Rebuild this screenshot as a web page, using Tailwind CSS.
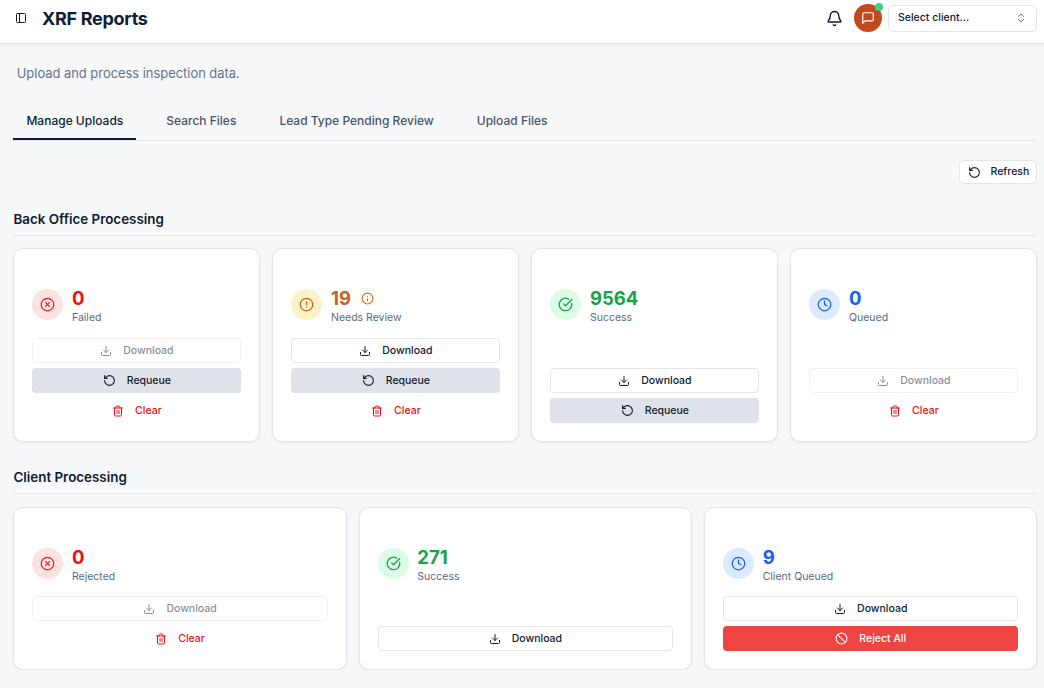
<!DOCTYPE html>
<html lang="en">
<head>
  <meta charset="UTF-8" />
  <title>XRF Reports</title>
  <meta name="viewport" content="width=device-width, initial-scale=1.0" />
  <script src="https://cdn.jsdelivr.net/npm/@tailwindcss/browser@4"></script>
</head>
<body class="bg-[#f7f8fa] text-[#0f1c33] font-['Inter',sans-serif] overflow-hidden">

  <svg class="hidden">
    <symbol id="i-panel" viewBox="0 0 24 24"><rect x="3" y="3" width="18" height="18" rx="2"/><path d="M9 3v18"/></symbol>
    <symbol id="i-bell" viewBox="0 0 24 24"><path d="M10.268 21a2 2 0 0 0 3.464 0"/><path d="M3.262 15.326A1 1 0 0 0 4 17h16a1 1 0 0 0 .74-1.673C19.41 13.956 18 12.499 18 8A6 6 0 0 0 6 8c0 4.499-1.411 5.956-2.738 7.326"/></symbol>
    <symbol id="i-chat" viewBox="0 0 24 24"><path d="M21 15a2 2 0 0 1-2 2H7l-4 4V5a2 2 0 0 1 2-2h14a2 2 0 0 1 2 2z"/></symbol>
    <symbol id="i-updown" viewBox="0 0 24 24"><path d="m7 15 5 5 5-5"/><path d="m7 9 5-5 5 5"/></symbol>
    <symbol id="i-rotate" viewBox="0 0 24 24"><path d="M3 12a9 9 0 1 0 9-9 9.75 9.75 0 0 0-6.74 2.74L3 8"/><path d="M3 3v5h5"/></symbol>
    <symbol id="i-download" viewBox="0 0 24 24"><path d="M21 15v4a2 2 0 0 1-2 2H5a2 2 0 0 1-2-2v-4"/><path d="m7 10 5 5 5-5"/><path d="M12 15V3"/></symbol>
    <symbol id="i-trash" viewBox="0 0 24 24"><path d="M3 6h18"/><path d="M19 6v14c0 1-1 2-2 2H7c-1 0-2-1-2-2V6"/><path d="M8 6V4c0-1 1-2 2-2h4c1 0 2 1 2 2v2"/><path d="M10 11v6"/><path d="M14 11v6"/></symbol>
    <symbol id="i-xcircle" viewBox="0 0 24 24"><circle cx="12" cy="12" r="10"/><path d="m15 9-6 6"/><path d="m9 9 6 6"/></symbol>
    <symbol id="i-alert" viewBox="0 0 24 24"><circle cx="12" cy="12" r="10"/><path d="M12 8v4"/><path d="M12 16h.01"/></symbol>
    <symbol id="i-info" viewBox="0 0 24 24"><circle cx="12" cy="12" r="10"/><path d="M12 16v-4"/><path d="M12 8h.01"/></symbol>
    <symbol id="i-check" viewBox="0 0 24 24"><path d="M21.801 10A10 10 0 1 1 17 3.335"/><path d="m9 11 3 3L22 4"/></symbol>
    <symbol id="i-clock" viewBox="0 0 24 24"><circle cx="12" cy="12" r="10"/><path d="M12 6v6l4 2"/></symbol>
    <symbol id="i-ban" viewBox="0 0 24 24"><circle cx="12" cy="12" r="10"/><path d="m4.9 4.9 14.2 14.2"/></symbol>
  </svg>

  <header class="h-[44px] bg-white border-b border-[#e2e5ea] shadow-[0_1px_2px_rgba(15,28,51,0.08)] flex items-center pl-[15px] pr-[7px] pb-[7px]">
    <svg class="w-3 h-3 fill-none stroke-current stroke-2 [stroke-linecap:round] [stroke-linejoin:round]"><use href="#i-panel"/></svg>
    <h1 class="ml-[15px] text-[18px] font-bold tracking-[-0.3px]">XRF Reports</h1>
    <svg class="ml-auto w-[17px] h-[17px] fill-none stroke-current stroke-2 [stroke-linecap:round] [stroke-linejoin:round]"><use href="#i-bell"/></svg>
    <div class="relative ml-[11px] w-7 h-7 rounded-full bg-[#c2491a] flex items-center justify-center text-white">
      <svg class="w-[14px] h-[14px] fill-none stroke-current stroke-2 [stroke-linecap:round] [stroke-linejoin:round]"><use href="#i-chat"/></svg>
      <span class="absolute -top-[1px] -right-[1px] w-2 h-2 rounded-full bg-[#3ecf8e]"></span>
    </div>
    <div class="ml-[6px] w-[149px] h-[27px] bg-white border border-[#e2e5ea] rounded-[5px] flex items-center justify-between pl-[9px] pr-[9px] text-[10.5px] font-medium">
      Select client...
      <svg class="w-3 h-3 fill-none stroke-[#66728a] stroke-2 [stroke-linecap:round] [stroke-linejoin:round]"><use href="#i-updown"/></svg>
    </div>
  </header>

  <main class="pl-[13.4px] pr-[6.6px]">
    <p class="pt-[21px] pl-[3.4px] text-[12.9px] leading-[18px] text-[#64748b]">Upload and process inspection data.</p>

    <nav class="mt-[19px] h-[39px] flex gap-[17px] border-b border-[#e2e5ea] text-[12px] font-medium text-[#475569]">
      <a class="px-[13px] leading-[38px] border-b-2 border-[#0f1c33] text-[#0f1c33] h-[38px]">Manage Uploads</a>
      <a class="px-[13px] leading-[38px]">Search Files</a>
      <a class="px-[13px] leading-[38px]">Lead Type Pending Review</a>
      <a class="px-[13px] leading-[38px]">Upload Files</a>
    </nav>

    <div class="mt-[19px] flex justify-end">
      <button class="h-[24px] w-[78px] bg-white border border-[#e2e5ea] rounded-[5px] flex items-center justify-center gap-[10px] text-[10.5px] font-medium">
        <svg class="w-[13px] h-[13px] fill-none stroke-current stroke-2 [stroke-linecap:round] [stroke-linejoin:round]"><use href="#i-rotate"/></svg>
        Refresh
      </button>
    </div>

    <!-- back office -->
    <h2 class="mt-[27px] pb-[7px] border-b border-[#e2e5ea] text-[13.4px] leading-[17px] font-semibold">Back Office Processing</h2>
    <section class="mt-[12px] grid grid-cols-4 gap-[12px]">

      <div class="h-[194px] bg-white border border-[#e2e5ea] rounded-[10px] shadow-[0_1px_2px_rgba(15,28,51,0.08)] px-[18px] pt-[40px] pb-[18px] flex flex-col">
        <div class="flex gap-[8.6px]">
          <span class="w-[31px] h-[31px] rounded-full bg-[#fee2e2] text-[#e11d1d] flex items-center justify-center"><svg class="w-[15px] h-[15px] fill-none stroke-current stroke-2 [stroke-linecap:round] [stroke-linejoin:round]"><use href="#i-xcircle"/></svg></span>
          <div><p class="text-[18.5px] leading-[19px] font-bold text-[#ee0f12]">0</p><p class="mt-[3px] text-[10.5px] leading-[14px] text-[#5a6a82]">Failed</p></div>
        </div>
        <div class="mt-auto flex flex-col gap-[5px]">
          <button class="h-[25px] bg-white border border-[#e2e5ea] rounded-[4px] flex items-center justify-center gap-[11px] text-[10.5px] font-medium opacity-50"><svg class="w-3 h-3 fill-none stroke-current stroke-2 [stroke-linecap:round] [stroke-linejoin:round]"><use href="#i-download"/></svg>Download</button>
          <button class="h-[25px] bg-[#dfe2e8] rounded-[4px] flex items-center justify-center gap-[11px] text-[10.5px] font-medium"><svg class="w-[13px] h-[13px] fill-none stroke-current stroke-2 [stroke-linecap:round] [stroke-linejoin:round]"><use href="#i-rotate"/></svg>Requeue</button>
          <button class="h-[25px] rounded-[4px] flex items-center justify-center gap-[11px] text-[10.5px] font-medium text-[#ee0f12]"><svg class="w-3 h-3 fill-none stroke-current stroke-2 [stroke-linecap:round] [stroke-linejoin:round]"><use href="#i-trash"/></svg>Clear</button>
        </div>
      </div>

      <div class="h-[194px] bg-white border border-[#e2e5ea] rounded-[10px] shadow-[0_1px_2px_rgba(15,28,51,0.08)] px-[18px] pt-[40px] pb-[18px] flex flex-col">
        <div class="flex gap-[8.6px]">
          <span class="w-[31px] h-[31px] rounded-full bg-[#fef3c7] text-[#d9581a] flex items-center justify-center"><svg class="w-[15px] h-[15px] fill-none stroke-current stroke-2 [stroke-linecap:round] [stroke-linejoin:round]"><use href="#i-alert"/></svg></span>
          <div>
            <p class="flex items-center gap-[10px] text-[18.5px] leading-[19px] font-bold text-[#d0601f]">19<svg class="w-[13px] h-[13px] -mt-[1px] fill-none stroke-[#e8620f] stroke-2 [stroke-linecap:round] [stroke-linejoin:round]"><use href="#i-info"/></svg></p>
            <p class="mt-[3px] text-[10.5px] leading-[14px] text-[#5a6a82]">Needs Review</p>
          </div>
        </div>
        <div class="mt-auto flex flex-col gap-[5px]">
          <button class="h-[25px] bg-white border border-[#e2e5ea] rounded-[4px] flex items-center justify-center gap-[11px] text-[10.5px] font-medium"><svg class="w-3 h-3 fill-none stroke-current stroke-2 [stroke-linecap:round] [stroke-linejoin:round]"><use href="#i-download"/></svg>Download</button>
          <button class="h-[25px] bg-[#dfe2e8] rounded-[4px] flex items-center justify-center gap-[11px] text-[10.5px] font-medium"><svg class="w-[13px] h-[13px] fill-none stroke-current stroke-2 [stroke-linecap:round] [stroke-linejoin:round]"><use href="#i-rotate"/></svg>Requeue</button>
          <button class="h-[25px] rounded-[4px] flex items-center justify-center gap-[11px] text-[10.5px] font-medium text-[#ee0f12]"><svg class="w-3 h-3 fill-none stroke-current stroke-2 [stroke-linecap:round] [stroke-linejoin:round]"><use href="#i-trash"/></svg>Clear</button>
        </div>
      </div>

      <div class="h-[194px] bg-white border border-[#e2e5ea] rounded-[10px] shadow-[0_1px_2px_rgba(15,28,51,0.08)] px-[18px] pt-[40px] pb-[18px] flex flex-col">
        <div class="flex gap-[8.6px]">
          <span class="w-[31px] h-[31px] rounded-full bg-[#dcfce7] text-[#16a34a] flex items-center justify-center"><svg class="w-[15px] h-[15px] fill-none stroke-current stroke-2 [stroke-linecap:round] [stroke-linejoin:round]"><use href="#i-check"/></svg></span>
          <div><p class="text-[18.5px] leading-[19px] font-bold text-[#16a34a]">9564</p><p class="mt-[3px] text-[10.5px] leading-[14px] text-[#5a6a82]">Success</p></div>
        </div>
        <div class="mt-auto flex flex-col gap-[5px]">
          <button class="h-[25px] bg-white border border-[#e2e5ea] rounded-[4px] flex items-center justify-center gap-[11px] text-[10.5px] font-medium"><svg class="w-3 h-3 fill-none stroke-current stroke-2 [stroke-linecap:round] [stroke-linejoin:round]"><use href="#i-download"/></svg>Download</button>
          <button class="h-[25px] bg-[#dfe2e8] rounded-[4px] flex items-center justify-center gap-[11px] text-[10.5px] font-medium"><svg class="w-[13px] h-[13px] fill-none stroke-current stroke-2 [stroke-linecap:round] [stroke-linejoin:round]"><use href="#i-rotate"/></svg>Requeue</button>
        </div>
      </div>

      <div class="h-[194px] bg-white border border-[#e2e5ea] rounded-[10px] shadow-[0_1px_2px_rgba(15,28,51,0.08)] px-[18px] pt-[40px] pb-[18px] flex flex-col">
        <div class="flex gap-[8.6px]">
          <span class="w-[31px] h-[31px] rounded-full bg-[#dbeafe] text-[#155dfc] flex items-center justify-center"><svg class="w-[15px] h-[15px] fill-none stroke-current stroke-2 [stroke-linecap:round] [stroke-linejoin:round]"><use href="#i-clock"/></svg></span>
          <div><p class="text-[18.5px] leading-[19px] font-bold text-[#155dfc]">0</p><p class="mt-[3px] text-[10.5px] leading-[14px] text-[#5a6a82]">Queued</p></div>
        </div>
        <div class="mt-auto flex flex-col gap-[5px]">
          <button class="h-[25px] bg-white border border-[#e2e5ea] rounded-[4px] flex items-center justify-center gap-[11px] text-[10.5px] font-medium opacity-50"><svg class="w-3 h-3 fill-none stroke-current stroke-2 [stroke-linecap:round] [stroke-linejoin:round]"><use href="#i-download"/></svg>Download</button>
          <button class="h-[25px] rounded-[4px] flex items-center justify-center gap-[11px] text-[10.5px] font-medium text-[#ee0f12]"><svg class="w-3 h-3 fill-none stroke-current stroke-2 [stroke-linecap:round] [stroke-linejoin:round]"><use href="#i-trash"/></svg>Clear</button>
        </div>
      </div>
    </section>

    <!-- client -->
    <h2 class="mt-[27px] pb-[7px] border-b border-[#e2e5ea] text-[13.4px] leading-[17px] font-semibold">Client Processing</h2>
    <section class="mt-[13px] grid grid-cols-3 gap-[12px]">

      <div class="h-[163px] bg-white border border-[#e2e5ea] rounded-[10px] shadow-[0_1px_2px_rgba(15,28,51,0.08)] px-[18px] pt-[40px] pb-[18px] flex flex-col">
        <div class="flex gap-[8.6px]">
          <span class="w-[31px] h-[31px] rounded-full bg-[#fee2e2] text-[#e11d1d] flex items-center justify-center"><svg class="w-[15px] h-[15px] fill-none stroke-current stroke-2 [stroke-linecap:round] [stroke-linejoin:round]"><use href="#i-xcircle"/></svg></span>
          <div><p class="text-[18.5px] leading-[19px] font-bold text-[#ee0f12]">0</p><p class="mt-[3px] text-[10.5px] leading-[14px] text-[#5a6a82]">Rejected</p></div>
        </div>
        <div class="mt-auto flex flex-col gap-[5px]">
          <button class="h-[25px] bg-white border border-[#e2e5ea] rounded-[4px] flex items-center justify-center gap-[11px] text-[10.5px] font-medium opacity-50"><svg class="w-3 h-3 fill-none stroke-current stroke-2 [stroke-linecap:round] [stroke-linejoin:round]"><use href="#i-download"/></svg>Download</button>
          <button class="h-[25px] rounded-[4px] flex items-center justify-center gap-[11px] text-[10.5px] font-medium text-[#ee0f12]"><svg class="w-3 h-3 fill-none stroke-current stroke-2 [stroke-linecap:round] [stroke-linejoin:round]"><use href="#i-trash"/></svg>Clear</button>
        </div>
      </div>

      <div class="h-[163px] bg-white border border-[#e2e5ea] rounded-[10px] shadow-[0_1px_2px_rgba(15,28,51,0.08)] px-[18px] pt-[40px] pb-[18px] flex flex-col">
        <div class="flex gap-[8.6px]">
          <span class="w-[31px] h-[31px] rounded-full bg-[#dcfce7] text-[#16a34a] flex items-center justify-center"><svg class="w-[15px] h-[15px] fill-none stroke-current stroke-2 [stroke-linecap:round] [stroke-linejoin:round]"><use href="#i-check"/></svg></span>
          <div><p class="text-[18.5px] leading-[19px] font-bold text-[#16a34a]">271</p><p class="mt-[3px] text-[10.5px] leading-[14px] text-[#5a6a82]">Success</p></div>
        </div>
        <div class="mt-auto flex flex-col gap-[5px]">
          <button class="h-[25px] bg-white border border-[#e2e5ea] rounded-[4px] flex items-center justify-center gap-[11px] text-[10.5px] font-medium"><svg class="w-3 h-3 fill-none stroke-current stroke-2 [stroke-linecap:round] [stroke-linejoin:round]"><use href="#i-download"/></svg>Download</button>
        </div>
      </div>

      <div class="h-[163px] bg-white border border-[#e2e5ea] rounded-[10px] shadow-[0_1px_2px_rgba(15,28,51,0.08)] px-[18px] pt-[40px] pb-[18px] flex flex-col">
        <div class="flex gap-[8.6px]">
          <span class="w-[31px] h-[31px] rounded-full bg-[#dbeafe] text-[#155dfc] flex items-center justify-center"><svg class="w-[15px] h-[15px] fill-none stroke-current stroke-2 [stroke-linecap:round] [stroke-linejoin:round]"><use href="#i-clock"/></svg></span>
          <div><p class="text-[18.5px] leading-[19px] font-bold text-[#155dfc]">9</p><p class="mt-[3px] text-[10.5px] leading-[14px] text-[#5a6a82]">Client Queued</p></div>
        </div>
        <div class="mt-auto flex flex-col gap-[5px]">
          <button class="h-[25px] bg-white border border-[#e2e5ea] rounded-[4px] flex items-center justify-center gap-[11px] text-[10.5px] font-medium"><svg class="w-3 h-3 fill-none stroke-current stroke-2 [stroke-linecap:round] [stroke-linejoin:round]"><use href="#i-download"/></svg>Download</button>
          <button class="h-[25px] bg-[#ef4444] text-white rounded-[4px] flex items-center justify-center gap-[11px] text-[10.5px] font-medium"><svg class="w-[13px] h-[13px] fill-none stroke-current stroke-2 [stroke-linecap:round] [stroke-linejoin:round]"><use href="#i-ban"/></svg>Reject All</button>
        </div>
      </div>
    </section>
  </main>

</body>
</html>
